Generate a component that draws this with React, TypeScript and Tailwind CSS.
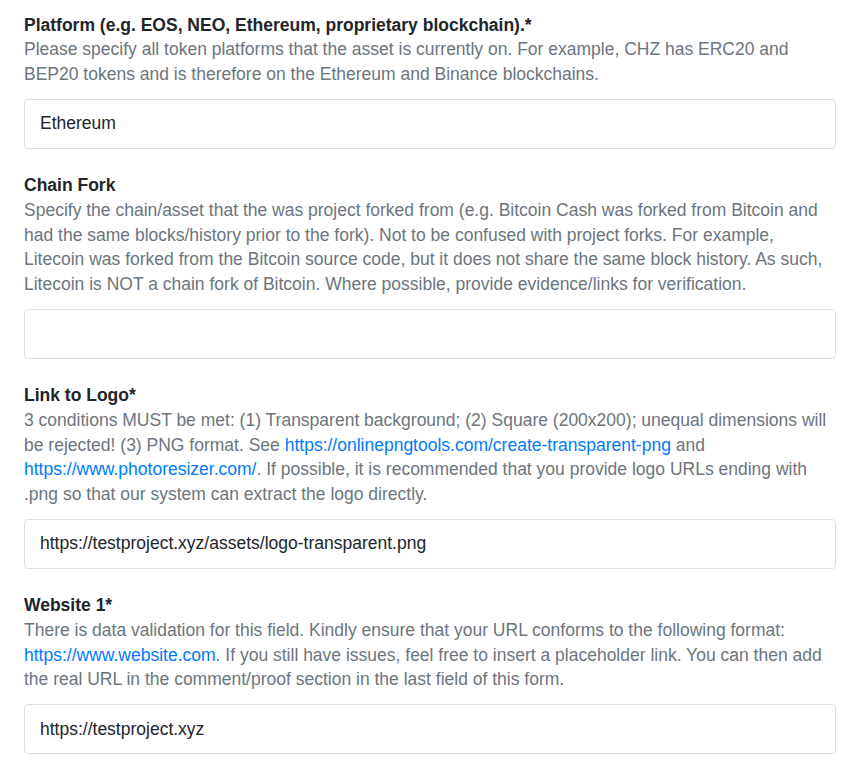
import React from "react";

const font = { fontFamily: '"Liberation Sans", Arial, sans-serif' };

function Field({
  title,
  children,
  value,
}: {
  title: string;
  children: React.ReactNode;
  value: string;
}) {
  return (
    <div className="mb-[24.5px]">
      <div className="text-[17.5px] leading-[24.75px] font-bold text-[#212529]">{title}</div>
      <div className="text-[17.5px] leading-[24.75px] text-[#6c757d]">{children}</div>
      <div className="mt-[11.75px] h-[50px] rounded-[4px] border border-[#dcdfe3] bg-white px-[15px] flex items-center text-[17.5px] text-[#212529]">
        {value}
      </div>
    </div>
  );
}

const Link = ({ children }: { children: React.ReactNode }) => (
  <a className="text-[#007bff]">{children}</a>
);

export default function App() {
  return (
    <div className="min-h-screen bg-white pl-[24px] pr-[19px] pt-[12.5px]" style={font}>
      <Field
        title="Platform (e.g. EOS, NEO, Ethereum, proprietary blockchain).*"
        value="Ethereum"
      >
        Please specify all token platforms that the asset is currently on. For example, CHZ has ERC20 and BEP20 tokens and is therefore on the Ethereum and Binance blockchains.
      </Field>
      <Field title="Chain Fork" value="">
        Specify the chain/asset that the was project forked from (e.g. Bitcoin Cash was forked from Bitcoin and had the same blocks/history prior to the fork). Not to be confused with project forks. For example, Litecoin was forked from the Bitcoin source code, but it does not share the same block history. As such, Litecoin is NOT a chain fork of Bitcoin. Where possible, provide evidence/links for verification.
      </Field>
      <Field title="Link to Logo*" value="https://testproject.xyz/assets/logo-transparent.png">
        3 conditions MUST be met: (1) Transparent background; (2) Square (200x200); unequal dimensions will be rejected! (3) PNG format. See{" "}
        <Link>https://onlinepngtools.com/create-transparent-png</Link> and{" "}
        <Link>https://www.photoresizer.com/</Link>. If possible, it is recommended that you provide logo URLs ending with .png so that our system can extract the logo directly.
      </Field>
      <Field title="Website 1*" value="https://testproject.xyz">
        There is data validation for this field. Kindly ensure that your URL conforms to the following format:{" "}
        <Link>https://www.website.com</Link>. If you still have issues, feel free to insert a placeholder link. You can then add the real URL in the comment/proof section in the last field of this form.
      </Field>
    </div>
  );
}
